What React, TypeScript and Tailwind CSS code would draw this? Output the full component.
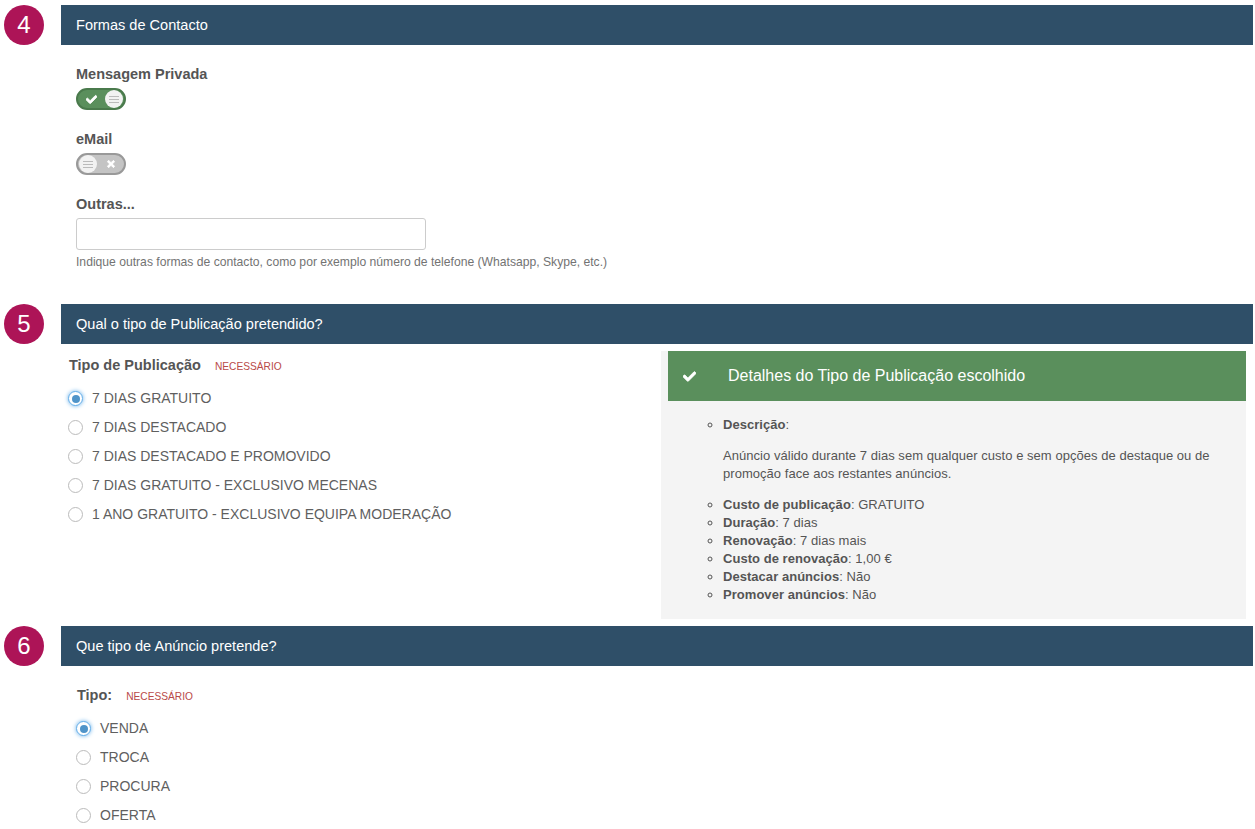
import { FaCheck, FaTimes } from "react-icons/fa";

function Header({ n, title }: { n: number; title: string }) {
  return (
    <div className="flex items-center h-10">
      <div className="w-[61px] pl-1 shrink-0">
        <div className="w-10 h-10 rounded-full bg-[#ad1457] text-white flex items-center justify-center text-[24px]">{n}</div>
      </div>
      <div className="w-[1192px] h-10 bg-[#2f4f68] text-white text-[14.55px] pl-[15px] pt-px flex items-center">{title}</div>
    </div>
  );
}

function Grip() {
  return (
    <div className="w-[18px] h-[18px] rounded-full bg-[#f2f2f2] flex flex-col items-center justify-center gap-[2px]">
      <div className="w-[10px] h-px bg-[#bbbbbb]" />
      <div className="w-[10px] h-px bg-[#bbbbbb]" />
      <div className="w-[10px] h-px bg-[#bbbbbb]" />
    </div>
  );
}

function Toggle({ on }: { on: boolean }) {
  if (on) {
    return (
      <div className="w-[50px] h-[22px] rounded-full bg-[#5a8f5c] border-2 border-[#4a7a4c] flex items-center justify-between pl-[8px] pr-[1px]">
        <FaCheck size={11} stroke="currentColor" strokeWidth={40} className="text-white" />
        <Grip />
      </div>
    );
  }
  return (
    <div className="w-[50px] h-[22px] rounded-full bg-[#c4c4c4] border-2 border-[#999999] flex items-center justify-between pl-[1px] pr-[8px]">
      <Grip />
      <FaTimes size={10} stroke="currentColor" strokeWidth={50} className="text-white" />
    </div>
  );
}

function Radio({ checked, label }: { checked?: boolean; label: string }) {
  return (
    <div className="flex items-center h-[29px] text-[14px] text-[#5f5f5f]">
      <div
        className={
          checked
            ? "w-[15px] h-[15px] rounded-full bg-white border border-[#66afe9] shadow-[0_0_4px_#66afe9] flex items-center justify-center shrink-0"
            : "w-[15px] h-[15px] rounded-full bg-white border border-[#bbbbbb] shrink-0"
        }
      >
        {checked && <div className="w-[8px] h-[8px] rounded-full bg-[#4f94c9]" />}
      </div>
      <span className="ml-[9px]">{label}</span>
    </div>
  );
}

function Required() {
  return <span className="text-[10.2px] text-[#b94a48] font-normal ml-[14px]">NECESSÁRIO</span>;
}

function Detail({ k, v }: { k: string; v: string }) {
  return (
    <li>
      <b>{k}</b>: {v}
    </li>
  );
}

export default function App() {
  return (
    <div className="w-[1255px] h-[829px] overflow-hidden bg-white pt-[5px] font-['Liberation_Sans',Arial,sans-serif] text-[#555555]">
      {/* 4 */}
      <Header n={4} title="Formas de Contacto" />
      <div className="h-[259px] pl-[76px] pt-[20px]">
        <div className="text-[14.5px] font-bold leading-[18px]">Mensagem Privada</div>
        <div className="mt-[5px]"><Toggle on /></div>
        <div className="text-[14.5px] font-bold leading-[18px] mt-[20px]">eMail</div>
        <div className="mt-[5px]"><Toggle on={false} /></div>
        <div className="text-[14.5px] font-bold leading-[18px] mt-[20px]">Outras...</div>
        <input className="block mt-[5px] w-[350px] h-[32px] border border-[#cccccc] rounded-[3px] bg-white" />
        <div className="text-[12.15px] text-[#737373] mt-[3px]">
          Indique outras formas de contacto, como por exemplo número de telefone (Whatsapp, Skype, etc.)
        </div>
      </div>

      {/* 5 */}
      <Header n={5} title="Qual o tipo de Publicação pretendido?" />
      <div className="h-[282px] flex">
        <div className="w-[661px] pl-[68px] shrink-0">
          <div className="mt-[12px] mb-[8px] pl-px leading-[18px] text-[14.5px] font-bold">
            Tipo de Publicação
            <Required />
          </div>
          <Radio checked label="7 DIAS GRATUITO" />
          <Radio label="7 DIAS DESTACADO" />
          <Radio label="7 DIAS DESTACADO E PROMOVIDO" />
          <Radio label="7 DIAS GRATUITO - EXCLUSIVO MECENAS" />
          <Radio label="1 ANO GRATUITO - EXCLUSIVO EQUIPA MODERAÇÃO" />
        </div>
        <div className="mt-[7px] mb-[7px] w-[585px] bg-[#f4f4f4] pl-[7px]">
          <div className="h-[50px] bg-[#5a8f5c] text-white text-[16px] flex items-center">
            <FaCheck size={13} stroke="currentColor" strokeWidth={30} className="ml-[15px] mr-[32px]" />
            Detalhes do Tipo de Publicação escolhido
          </div>
          <ul className="list-[circle] pl-[55px] pr-[20px] pt-[15px] text-[13px] tracking-[0.003em] leading-[18px]">
            <li>
              <b>Descrição</b>:
              <p className="mt-[13px] mb-[13px]">
                Anúncio válido durante 7 dias sem qualquer custo e sem opções de destaque ou de promoção face aos restantes anúncios.
              </p>
            </li>
            <Detail k="Custo de publicação" v="GRATUITO" />
            <Detail k="Duração" v="7 dias" />
            <Detail k="Renovação" v="7 dias mais" />
            <Detail k="Custo de renovação" v="1,00 €" />
            <Detail k="Destacar anúncios" v="Não" />
            <Detail k="Promover anúncios" v="Não" />
          </ul>
        </div>
      </div>

      {/* 6 */}
      <Header n={6} title="Que tipo de Anúncio pretende?" />
      <div className="pl-[76px]">
        <div className="mt-[20px] mb-[8px] pl-px leading-[18px] text-[14.5px] font-bold">
          Tipo:
          <Required />
        </div>
        <Radio checked label="VENDA" />
        <Radio label="TROCA" />
        <Radio label="PROCURA" />
        <Radio label="OFERTA" />
      </div>
    </div>
  );
}
